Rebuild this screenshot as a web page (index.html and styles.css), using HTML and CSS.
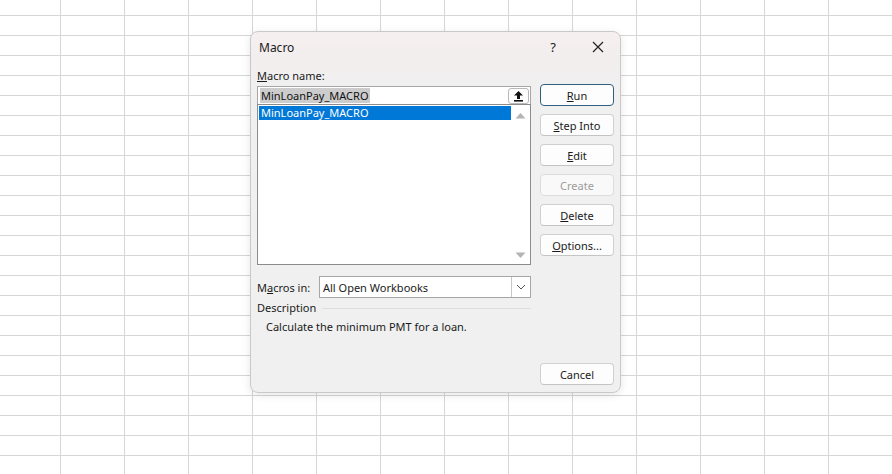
FILE: index.html
```html
<!DOCTYPE html>
<html>
<head>
<meta charset="utf-8">
<link rel="stylesheet" href="styles.css">
</head>
<body>
<div class="sheet"></div>
<div class="dialog">
  <div class="titlebar">
    <span class="title">Macro</span>
    <span class="help">?</span>
    <span class="close">
      <svg width="12" height="12" viewBox="0 0 12 12"><path d="M1 1L11 11M11 1L1 11" stroke="#222" stroke-width="1.2" fill="none"/></svg>
    </span>
  </div>
  <div class="main">
    <div class="left">
      <div class="label"><u>M</u>acro name:</div>
      <div class="namebox">
        <span class="sel">MinLoanPay_MACRO</span>
        <span class="upbtn">
          <svg width="11" height="12" viewBox="0 0 11 12"><path d="M5.5 1L1 5.5H4V9H7V5.5H10Z" fill="#111"/><rect x="1" y="10" width="9" height="1.6" fill="#111"/></svg>
        </span>
      </div>
      <div class="list">
        <div class="items">
          <div class="item selected">MinLoanPay_MACRO</div>
        </div>
        <div class="scroll">
          <svg width="11" height="7" viewBox="0 0 11 7"><path d="M0.5 6.5L5.5 1L10.5 6.5Z" fill="#b4b4b4"/></svg>
          <svg width="11" height="7" viewBox="0 0 11 7"><path d="M0.5 0.5L5.5 6L10.5 0.5Z" fill="#b4b4b4"/></svg>
        </div>
      </div>
    </div>
    <div class="right">
      <div class="btn default"><u>R</u>un</div>
      <div class="btn"><u>S</u>tep Into</div>
      <div class="btn"><u>E</u>dit</div>
      <div class="btn disabled">Create</div>
      <div class="btn"><u>D</u>elete</div>
      <div class="btn"><u>O</u>ptions...</div>
    </div>
  </div>
  <div class="macrosin">
    <span class="milabel">M<u>a</u>cros in:</span>
    <div class="combo">
      <span class="combotext">All Open Workbooks</span>
      <span class="comboarrow">
        <svg width="10" height="6" viewBox="0 0 10 6"><path d="M1 1L5 5L9 1" stroke="#555" stroke-width="1" fill="none"/></svg>
      </span>
    </div>
  </div>
  <div class="descrow">
    <span class="desclabel">Description</span>
    <span class="descline"></span>
  </div>
  <div class="desctext">Calculate the minimum PMT for a loan.</div>
  <div class="footer">
    <div class="btn">Cancel</div>
  </div>
</div>
</body>
</html>
```
FILE: styles.css
```css
html, body {
  margin: 0;
  padding: 0;
}
body {
  width: 892px;
  height: 474px;
  overflow: hidden;
  background: #ffffff;
  font-family: "Noto Sans", "Liberation Sans", sans-serif;
  font-size: 11px;
  color: #1a1a1a;
  position: relative;
}
.sheet {
  width: 892px;
  height: 474px;
  background-color: #fff;
  background-image:
    linear-gradient(to right, #d6d6d6 1px, transparent 1px),
    linear-gradient(to bottom, #d6d6d6 1px, transparent 1px);
  background-size: 64px 20px;
  background-position: 60px 15px;
}
.dialog {
  position: absolute;
  left: 250px;
  top: 31px;
  width: 357px;
  height: 360px;
  border: 1px solid #c9c9c9;
  border-radius: 8px;
  background: linear-gradient(to bottom, #f6efef 0px, #f2eeee 30px, #f0f0f0 60px, #f0f0f0 100%);
  box-shadow: 0 2px 8px rgba(0,0,0,0.10);
  display: flex;
  flex-direction: column;
  padding: 0 6px;
  box-sizing: content-box;
}
.titlebar {
  height: 30px;
  display: flex;
  align-items: center;
  margin: 0 -6px;
  padding: 0 0 0 8px;
}
.title {
  flex: 1;
  font-size: 12px;
  color: #1a1a1a;
}
.help {
  width: 46px;
  text-align: center;
  font-size: 13px;
  color: #222;
}
.close {
  width: 44px;
  display: flex;
  justify-content: center;
  align-items: center;
}
.main {
  display: flex;
  gap: 9px;
  margin-top: 6px;
}
.left {
  width: 274px;
  display: flex;
  flex-direction: column;
}
.label {
  height: 16px;
  line-height: 16px;
}
.namebox {
  margin-top: 2px;
  height: 18px;
  box-sizing: border-box;
  border: 1px solid #a6a6a6;
  border-bottom: none;
  background: #fff;
  display: flex;
  align-items: center;
  padding-left: 2px;
}
.sel {
  background: #cccccc;
  line-height: 15px;
  padding: 0 1px;
  color: #111;
}
.upbtn {
  margin-left: auto;
  width: 21px;
  height: 16px;
  border: 1px solid #b8b8b8;
  border-radius: 3px;
  background: #fdfdfd;
  display: flex;
  align-items: center;
  justify-content: center;
  box-sizing: border-box;
  margin-right: 1px;
}
.list {
  height: 161px;
  box-sizing: border-box;
  border: 1px solid #8c8c8c;
  background: #fff;
  display: flex;
}
.items {
  flex: 1;
  padding: 1px 0 0 1px;
}
.item {
  height: 14px;
  line-height: 14px;
  padding-left: 2px;
}
.item.selected {
  background: #0078d7;
  color: #fff;
}
.scroll {
  width: 19px;
  display: flex;
  flex-direction: column;
  justify-content: space-between;
  align-items: center;
  padding: 7px 0 5px;
}
.right {
  width: 74px;
  display: flex;
  flex-direction: column;
  gap: 8px;
  padding-top: 16px;
}
.btn {
  height: 22px;
  width: 74px;
  box-sizing: border-box;
  border: 1px solid #d0d0d0;
  border-bottom-color: #c4c4c4;
  border-radius: 4px;
  background: #fdfdfd;
  display: flex;
  align-items: center;
  justify-content: center;
  color: #1a1a1a;
}
.btn.default {
  border: 1px solid #2f5f7f;
}
.btn.disabled {
  color: #9d9d9d;
  background: #f9f9f9;
  border-color: #dcdcdc;
}
.macrosin {
  width: 274px;
  display: flex;
  align-items: center;
  margin-top: 11px;
  height: 22px;
}
.milabel {
  width: 62px;
}
.combo {
  flex: 1;
  height: 22px;
  box-sizing: border-box;
  border: 1px solid #a6a6a6;
  background: #fff;
  display: flex;
  align-items: center;
  padding-left: 3px;
}
.combotext {
  flex: 1;
}
.comboarrow {
  width: 18px;
  height: 20px;
  border-left: 1px solid #c8c8c8;
  display: flex;
  align-items: center;
  justify-content: center;
}
.descrow {
  width: 274px;
  display: flex;
  align-items: center;
  height: 16px;
  margin-top: 2px;
}
.desclabel {
  line-height: 16px;
}
.descline {
  flex: 1;
  height: 0;
  border-top: 1px solid #dedede;
  margin-left: 6px;
}
.desctext {
  margin-top: 3px;
  padding-left: 9px;
  line-height: 16px;
}
.footer {
  margin-top: auto;
  margin-bottom: 7px;
  display: flex;
  justify-content: flex-end;
}
```
